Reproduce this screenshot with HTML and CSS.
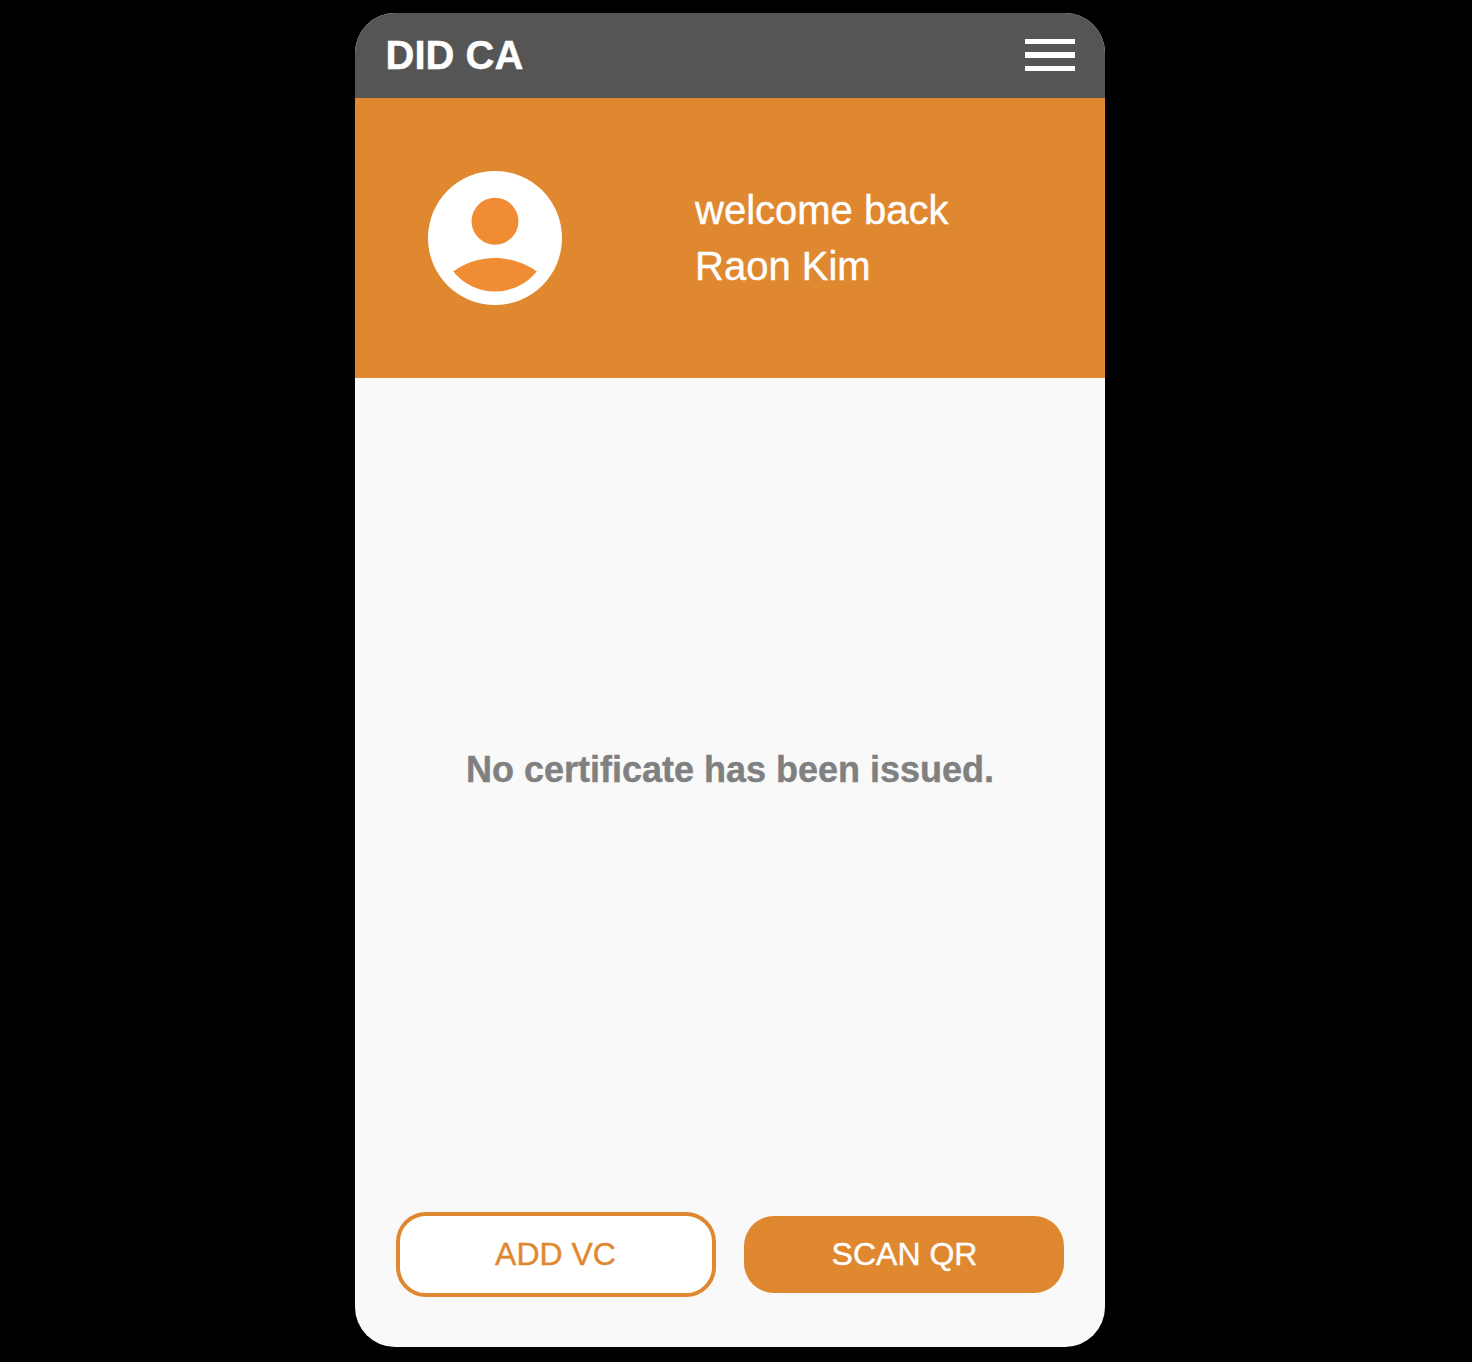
FILE: index.html
```html
<!DOCTYPE html>
<html lang="en">
<head>
<meta charset="utf-8">
<title>DID CA</title>
<link rel="stylesheet" href="styles.css">
</head>
<body>
<main class="phone">
  <header class="topbar">
    <h1 class="brand">DID CA</h1>
    <button class="menu" aria-label="Menu"><span class="menu-line"></span><span class="menu-line menu-line-middle"></span><span class="menu-line"></span></button>
  </header>
  <section class="profile">
    <svg class="avatar" viewBox="2 2 20 20" aria-hidden="true">
      <circle cx="12" cy="12" r="10" fill="#fff"/>
      <circle cx="12" cy="9.5" r="3.5" fill="#f08c33"/>
      <path d="M12 15C9.66 15 7.5 15.75 5.77 17A8 8 0 0 0 18.23 17C16.5 15.75 14.34 15 12 15Z" fill="#f08c33"/>
    </svg>
    <div class="greeting"><p>welcome back</p><p>Raon Kim</p></div>
  </section>
  <section class="empty"><p>No certificate has been issued.</p></section>
  <footer class="actions">
    <button class="button button-outline">ADD VC</button>
    <button class="button button-solid">SCAN QR</button>
  </footer>
</main>
</body>
</html>
```
FILE: styles.css
```css
* { box-sizing: border-box; }
body {
  margin: 0;
  padding: 13px 0 0 355px;
  height: 1362px;
  background: #000;
  font-family: "Liberation Sans", Arial, sans-serif;
  -webkit-text-stroke: 0.4px currentColor;
}
h1, p { margin: 0; }
button { font-family: inherit; cursor: pointer; }
.phone {
  width: 750px;
  height: 1334px;
  display: flex;
  flex-direction: column;
  overflow: hidden;
  border-radius: 40px;
  background: #f9f9f9;
}
.topbar {
  height: 85px;
  padding: 0 30px 1px;
  display: flex;
  align-items: center;
  justify-content: space-between;
  background: #555;
  color: #fff;
}
.brand { padding-left: 0.5px; font-size: 40px; line-height: 46px; font-weight: 700; }
.menu {
  width: 50px;
  padding: 0;
  border: 0;
  background: none;
  display: flex;
  flex-direction: column;
  gap: 8px;
}
.menu-line { height: 5px; background: #fff; }
.menu-line-middle { height: 6px; }
.profile {
  height: 280px;
  padding: 0 73px;
  display: flex;
  align-items: center;
  gap: 133px;
  background: #df8830;
}
.avatar { width: 134px; height: 134px; }
.greeting { color: #fff; font-size: 40px; line-height: 56px; }
.empty {
  flex: 1;
  padding-bottom: 50px;
  display: flex;
  align-items: center;
  justify-content: center;
  color: #808080;
  font-size: 36px;
  font-weight: 700;
}
.actions {
  padding: 0 41px 50px;
  display: flex;
  align-items: center;
  justify-content: space-between;
}
.button {
  width: 320px;
  height: 77px;
  padding: 0;
  border: 0;
  border-radius: 30px;
  font-size: 32px;
  -webkit-text-stroke: 0.4px currentColor;
}
.button-outline { height: 85px; padding-right: 1px; border: 4px solid #df8830; background: #fff; color: #df8830; }
.button-solid { padding-left: 1px; background: #df8830; color: #fff; }
```
